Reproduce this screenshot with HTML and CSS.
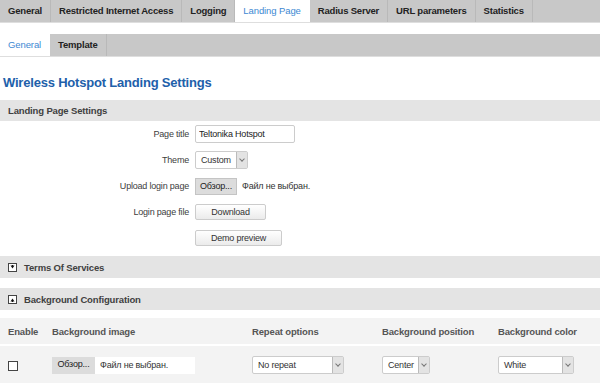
FILE: index.html
```html
<!DOCTYPE html>
<html lang="en">
<head>
  <meta charset="UTF-8">
  <title>Landing Page</title>
  <link rel="stylesheet" href="styles.css">
</head>
<body>
  <ul class="tabs">
    <li>General</li>
    <li>Restricted Internet Access</li>
    <li>Logging</li>
    <li class="active">Landing Page</li>
    <li>Radius Server</li>
    <li>URL parameters</li>
    <li>Statistics</li>
  </ul>
  <ul class="tabs sub">
    <li class="active">General</li>
    <li>Template</li>
  </ul>

  <h2 class="title">Wireless Hotspot Landing Settings</h2>

  <div class="section-head">Landing Page Settings</div>
  <div class="form">
    <div class="row">
      <label>Page title</label>
      <input class="text" type="text" value="Teltonika Hotspot">
    </div>
    <div class="row">
      <label>Theme</label>
      <div class="select theme"><span>Custom</span><i></i></div>
    </div>
    <div class="row">
      <label>Upload login page</label>
      <div class="file"><span class="browse">Обзор...</span><span class="none">Файл не выбран.</span></div>
    </div>
    <div class="row">
      <label>Login page file</label>
      <button class="btn download">Download</button>
    </div>
    <div class="row">
      <label></label>
      <button class="btn demo">Demo preview</button>
    </div>
  </div>

  <div class="section-head toggle">
    <svg width="9" height="9" viewBox="0 0 9 9"><rect x="0.5" y="0.5" width="8" height="8" fill="#fff" stroke="#444"/><path d="M2.5 2.5h4L4.5 5.5z" fill="#111"/><rect x="4" y="2" width="1" height="2" fill="#111"/></svg>
    Terms Of Services
  </div>
  <div class="section-head toggle">
    <svg width="9" height="9" viewBox="0 0 9 9"><rect x="0.5" y="0.5" width="8" height="8" fill="#fff" stroke="#444"/><path d="M2.5 6.5h4L4.5 3.5z" fill="#111"/><rect x="4" y="5" width="1" height="2" fill="#111"/></svg>
    Background Configuration
  </div>

  <table class="bg-table">
    <thead>
      <tr>
        <th class="c-enable">Enable</th>
        <th class="c-image">Background image</th>
        <th class="c-repeat">Repeat options</th>
        <th class="c-pos">Background position</th>
        <th>Background color</th>
      </tr>
    </thead>
    <tbody>
      <tr>
        <td><span class="check"></span></td>
        <td><div class="file wide"><span class="browse">Обзор...</span><span class="none">Файл не выбран.</span></div></td>
        <td><div class="select repeat"><span>No repeat</span><i></i></div></td>
        <td><div class="select pos"><span>Center</span><i></i></div></td>
        <td><div class="select color"><span>White</span><i></i></div></td>
      </tr>
    </tbody>
  </table>
</body>
</html>
```

FILE: styles.css
```css
body {
  margin: 0;
  font-family: "Liberation Sans", Arial, sans-serif;
  font-size: 9px;
  letter-spacing: -0.2px;
  color: #404040;
  background: #fff;
}
.tabs {
  list-style: none;
  margin: 0;
  padding: 0;
  display: flex;
  background: #c8c8c8;
  border-bottom: 1px solid #dedede;
  height: 22px;
}
.tabs li {
  flex-shrink: 0;
  white-space: nowrap;
  padding: 0 8px;
  line-height: 22px;
  font-size: 9.5px;
  letter-spacing: -0.2px;
  font-weight: bold;
  color: #222;
  border-right: 1px solid #b9b9b9;
}
.tabs li.active {
  background: #fff;
  color: #4089d3;
  font-weight: normal;
  letter-spacing: -0.1px;
  border-right-color: #fff;
}
.tabs.sub {
  margin-top: 11px;
}
.title {
  margin: 0;
  padding: 18px 0 0 3px;
  height: 25px;
  font-size: 13px;
  letter-spacing: -0.2px;
  color: #2160aa;
  font-weight: bold;
}
.section-head {
  background: #e4e4e4;
  height: 21px;
  padding-left: 8px;
  font-size: 9.5px;
  letter-spacing: -0.15px;
  font-weight: bold;
  color: #404040;
  display: flex;
  align-items: center;
  gap: 7px;
}
.section-head.toggle {
  height: 22px;
  margin-top: 5px;
}
.section-head.toggle + .section-head.toggle {
  margin-top: 10px;
}
.row {
  display: flex;
  align-items: center;
  gap: 6px;
  height: 26px;
}
.row label {
  width: 189px;
  text-align: right;
  color: #404040;
}
.text {
  width: 100px;
  height: 18px;
  box-sizing: border-box;
  border: 1px solid #ccc;
  border-radius: 2px;
  font: inherit;
  letter-spacing: inherit;
  color: #222;
  padding: 0 3px;
}
.select {
  display: flex;
  height: 18px;
  box-sizing: border-box;
  border: 1px solid #ccc;
  border-radius: 2px;
  background: #fff;
  color: #333;
}
.select span {
  flex: 1;
  line-height: 16px;
  padding-left: 5px;
  white-space: nowrap;
}
.select i {
  width: 10px;
  border-left: 1px solid #bbb;
  background: #e3e3e3;
  position: relative;
}
.select i::after {
  content: "";
  position: absolute;
  left: 3px;
  top: 5px;
  width: 3px;
  height: 3px;
  border-right: 1px solid #777;
  border-bottom: 1px solid #777;
  transform: rotate(45deg);
}
.theme { width: 53px; }
.file {
  display: flex;
  align-items: center;
  height: 17px;
}
.browse {
  display: inline-block;
  background: #dcdcdc;
  border: 1px solid #c4c4c4;
  height: 17px;
  width: 42px;
  text-align: center;
  box-sizing: border-box;
  line-height: 15px;
  color: #222;
}
.none {
  padding-left: 5px;
  color: #333;
}
.btn {
  font: inherit;
  letter-spacing: inherit;
  color: #333;
  height: 16px;
  line-height: 14px;
  padding: 0;
  border: 1px solid #ccc;
  border-radius: 2px;
  background: linear-gradient(#fff, #ebebeb);
}
.download { width: 71px; }
.demo { width: 87px; }
.bg-table {
  margin-top: 8px;
  width: 100%;
  table-layout: fixed;
  border-collapse: collapse;
  background: #f3f3f3;
}
.bg-table th {
  text-align: left;
  font-size: 9.5px;
  letter-spacing: -0.15px;
  font-weight: bold;
  color: #555;
  height: 26px;
  padding: 0 0 0 8px;
  border-bottom: 2px solid #fff;
  white-space: nowrap;
}
.bg-table td {
  height: 38px;
  padding: 0 0 0 8px;
  vertical-align: middle;
}
.c-enable { width: 36px; }
.c-image { width: 192px; }
.c-repeat { width: 122px; }
.c-pos { width: 108px; }
.check {
  display: block;
  width: 8px;
  height: 8px;
  border: 1px solid #444;
  background: #fff;
  margin-top: 2px;
}
.file.wide {
  width: 143px;
  background: #fff;
}
.file.wide .browse {
  border: none;
  width: 43px;
}
.repeat { width: 92px; }
.pos { width: 48px; }
.color { width: 76px; }
```
